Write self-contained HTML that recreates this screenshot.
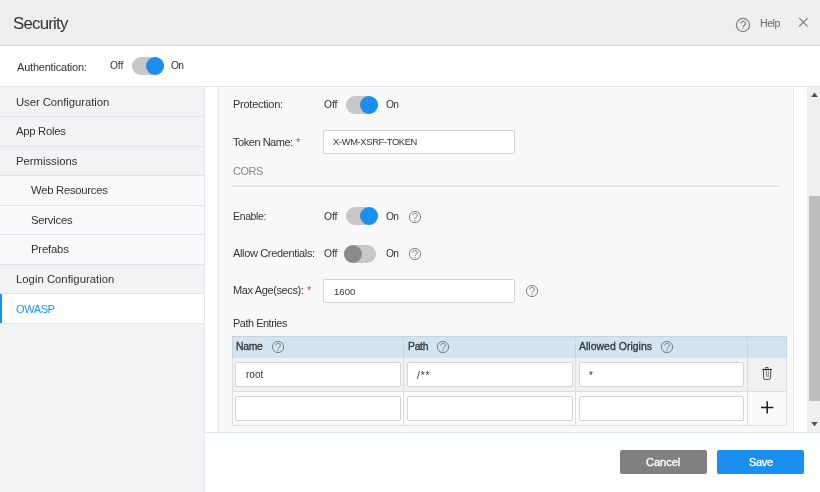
<!DOCTYPE html>
<html><head><meta charset="utf-8">
<style>
*{box-sizing:border-box;margin:0;padding:0}
html,body{width:820px;height:492px;overflow:hidden;background:#fff;font-family:"Liberation Sans",sans-serif;color:#333}
.t{position:absolute;white-space:nowrap;will-change:transform}
.b{position:absolute}
</style></head><body>
<div class="b" style="left:0px;top:0px;width:820px;height:45px;background:#eeeeee"></div>
<div class="b" style="left:0px;top:45px;width:820px;height:1px;background:#dcdcdc"></div>
<div class="t" style="left:12.60px;top:14.00px;font-size:16.8px;line-height:19px;color:#333;font-weight:normal;letter-spacing:-0.747px;">Security</div>
<svg class="b" style="left:735.2px;top:16.6px" width="16" height="16" viewBox="-8 -8 16 16"><circle cx="0" cy="0" r="6.6" fill="none" stroke="#808080" stroke-width="1.2"/><path d="M-2.18 -1.49 A2.30 2.18 0 1 1 1.03 0.46 C0.23 0.92 0 1.26 0 1.95" fill="none" stroke="#808080" stroke-width="1.2"/><circle cx="0" cy="3.56" r="0.69" fill="#808080"/></svg>
<div class="t" style="left:759.60px;top:17.00px;font-size:10.58px;line-height:12px;color:#666;font-weight:normal;letter-spacing:-0.491px;">Help</div>
<svg class="b" style="left:797px;top:16px" width="12" height="12" viewBox="0 0 12 12"><path d="M2.2 2.2L10.6 10.3M10.6 2.2L2.2 10.3" stroke="#747474" stroke-width="1.1"/></svg>
<div class="b" style="left:0px;top:86px;width:820px;height:1px;background:#e0e7ea"></div>
<div class="t" style="left:17.30px;top:61.00px;font-size:11px;line-height:12px;color:#333;font-weight:normal;letter-spacing:-0.208px;">Authentication:</div>
<div class="t" style="left:110.00px;top:60.00px;font-size:10.23px;line-height:11px;color:#333;font-weight:normal;letter-spacing:-0.101px;">Off</div>
<div class="b" style="left:132px;top:57px;width:32px;height:18px;border-radius:9px;background:#c9c7c7"></div>
<div class="b" style="left:146px;top:57px;width:18px;height:18px;border-radius:9px;background:#1a8fef"></div>
<div class="t" style="left:171.30px;top:60.00px;font-size:10.23px;line-height:11px;color:#333;font-weight:normal;letter-spacing:-0.600px;">On</div>
<div class="b" style="left:0px;top:87px;width:204px;height:405px;background:#f1f3f5"></div>
<div class="b" style="left:204px;top:87px;width:1px;height:405px;background:#e0e6ea"></div>
<div class="b" style="left:0px;top:87px;width:204px;height:29px;background:#f2f3f5"></div>
<div class="b" style="left:0px;top:116px;width:204px;height:1px;background:#dfe4e8"></div>
<div class="t" style="left:16.40px;top:96.00px;font-size:11.3px;line-height:12px;color:#333;font-weight:normal;letter-spacing:-0.059px;">User Configuration</div>
<div class="b" style="left:0px;top:117px;width:204px;height:29px;background:#f2f3f5"></div>
<div class="b" style="left:0px;top:146px;width:204px;height:1px;background:#dfe4e8"></div>
<div class="t" style="left:16.40px;top:125.00px;font-size:11.3px;line-height:12px;color:#333;font-weight:normal;letter-spacing:-0.284px;">App Roles</div>
<div class="b" style="left:0px;top:147px;width:204px;height:28px;background:#f2f3f5"></div>
<div class="b" style="left:0px;top:175px;width:204px;height:1px;background:#dfe4e8"></div>
<div class="t" style="left:16.40px;top:155.00px;font-size:11.3px;line-height:12px;color:#333;font-weight:normal;letter-spacing:-0.007px;">Permissions</div>
<div class="b" style="left:0px;top:176px;width:204px;height:29px;background:#f8f9fb"></div>
<div class="b" style="left:0px;top:205px;width:204px;height:1px;background:#dfe4e8"></div>
<div class="t" style="left:30.80px;top:184.00px;font-size:11.3px;line-height:12px;color:#333;font-weight:normal;letter-spacing:-0.276px;">Web Resources</div>
<div class="b" style="left:0px;top:206px;width:204px;height:28px;background:#f8f9fb"></div>
<div class="b" style="left:0px;top:234px;width:204px;height:1px;background:#dfe4e8"></div>
<div class="t" style="left:30.80px;top:214.00px;font-size:11.3px;line-height:12px;color:#333;font-weight:normal;letter-spacing:-0.238px;">Services</div>
<div class="b" style="left:0px;top:235px;width:204px;height:29px;background:#f8f9fb"></div>
<div class="b" style="left:0px;top:264px;width:204px;height:1px;background:#dfe4e8"></div>
<div class="t" style="left:30.80px;top:243.00px;font-size:11.3px;line-height:12px;color:#333;font-weight:normal;letter-spacing:-0.181px;">Prefabs</div>
<div class="b" style="left:0px;top:265px;width:204px;height:28px;background:#f2f3f5"></div>
<div class="b" style="left:0px;top:293px;width:204px;height:1px;background:#dfe4e8"></div>
<div class="t" style="left:16.40px;top:273.00px;font-size:11.3px;line-height:12px;color:#333;font-weight:normal;letter-spacing:0.017px;">Login Configuration</div>
<div class="b" style="left:0px;top:294px;width:204px;height:29px;background:#ffffff"></div>
<div class="b" style="left:0px;top:323px;width:204px;height:1px;background:#dfe4e8"></div>
<div class="t" style="left:16.40px;top:303.00px;font-size:11.11px;line-height:12px;color:#2196f3;font-weight:normal;letter-spacing:-0.484px;">OWASP</div>
<div class="b" style="left:0px;top:294px;width:2px;height:29px;background:#1a8fef"></div>
<div class="b" style="left:205px;top:87px;width:615px;height:345px;background:#fff"></div>
<div class="b" style="left:218px;top:87px;width:576px;height:345px;background:#f8f8f8"></div>
<div class="b" style="left:218px;top:87px;width:1px;height:345px;background:#e8e8e8"></div>
<div class="b" style="left:793px;top:87px;width:1px;height:345px;background:#e6e6e6"></div>
<div class="t" style="left:232.60px;top:98.00px;font-size:11px;line-height:12px;color:#333;font-weight:normal;letter-spacing:-0.253px;">Protection:</div>
<div class="t" style="left:323.50px;top:99.00px;font-size:10.28px;line-height:11px;color:#333;font-weight:normal;letter-spacing:-0.076px;">Off</div>
<div class="b" style="left:346px;top:96px;width:32px;height:18px;border-radius:9px;background:#c9c7c7"></div>
<div class="b" style="left:360px;top:96px;width:18px;height:18px;border-radius:9px;background:#1a8fef"></div>
<div class="t" style="left:385.70px;top:99.00px;font-size:10.23px;line-height:11px;color:#333;font-weight:normal;letter-spacing:-0.600px;">On</div>
<div class="t" style="left:232.90px;top:136.00px;font-size:10.97px;line-height:12px;color:#333;font-weight:normal;letter-spacing:-0.448px;">Token Name:</div>
<div class="t" style="left:295.50px;top:136.00px;font-size:11px;line-height:12px;color:#f03e3e;font-weight:normal;letter-spacing:0.000px;">*</div>
<div class="b" style="left:323px;top:130px;width:192px;height:24px;background:#fff;border:1px solid #d3d3d3;border-radius:2px"></div>
<div class="t" style="left:333.40px;top:136.00px;font-size:9.4px;line-height:11px;color:#333;font-weight:normal;letter-spacing:-0.360px;">X-WM-XSRF-TOKEN</div>
<div class="t" style="left:232.90px;top:165.00px;font-size:10.97px;line-height:12px;color:#888;font-weight:normal;letter-spacing:-0.425px;">CORS</div>
<div class="b" style="left:232px;top:185px;width:548px;height:2px;background:#e9e9e9"></div>
<div class="t" style="left:232.70px;top:211.00px;font-size:10.42px;line-height:11px;color:#333;font-weight:normal;letter-spacing:-0.300px;">Enable:</div>
<div class="t" style="left:323.80px;top:211.00px;font-size:10.35px;line-height:11px;color:#333;font-weight:normal;letter-spacing:-0.066px;">Off</div>
<div class="b" style="left:346px;top:207px;width:32px;height:18px;border-radius:9px;background:#c9c7c7"></div>
<div class="b" style="left:360px;top:207px;width:18px;height:18px;border-radius:9px;background:#1a8fef"></div>
<div class="t" style="left:385.50px;top:211.00px;font-size:10.23px;line-height:11px;color:#333;font-weight:normal;letter-spacing:-0.600px;">On</div>
<svg class="b" style="left:407.0px;top:208.5px" width="16" height="16" viewBox="-8 -8 16 16"><circle cx="0" cy="0" r="5.6" fill="none" stroke="#808080" stroke-width="1.0"/><path d="M-2.13 -1.46 A2.24 2.13 0 1 1 1.01 0.45 C0.22 0.90 0 1.23 0 1.90" fill="none" stroke="#808080" stroke-width="1.0"/><circle cx="0" cy="3.47" r="0.67" fill="#808080"/></svg>
<div class="t" style="left:232.70px;top:247.00px;font-size:11px;line-height:12px;color:#333;font-weight:normal;letter-spacing:-0.346px;">Allow Credentials:</div>
<div class="t" style="left:323.80px;top:248.00px;font-size:10.35px;line-height:11px;color:#333;font-weight:normal;letter-spacing:-0.066px;">Off</div>
<div class="b" style="left:344px;top:245px;width:32px;height:18px;border-radius:9px;background:#c9c7c7"></div>
<div class="b" style="left:344px;top:245px;width:18px;height:18px;border-radius:9px;background:#8a8a8a"></div>
<div class="t" style="left:385.50px;top:248.00px;font-size:10.23px;line-height:11px;color:#333;font-weight:normal;letter-spacing:-0.600px;">On</div>
<svg class="b" style="left:407.0px;top:246.3px" width="16" height="16" viewBox="-8 -8 16 16"><circle cx="0" cy="0" r="5.6" fill="none" stroke="#808080" stroke-width="1.0"/><path d="M-2.13 -1.46 A2.24 2.13 0 1 1 1.01 0.45 C0.22 0.90 0 1.23 0 1.90" fill="none" stroke="#808080" stroke-width="1.0"/><circle cx="0" cy="3.47" r="0.67" fill="#808080"/></svg>
<div class="t" style="left:232.90px;top:284.00px;font-size:11px;line-height:12px;color:#333;font-weight:normal;letter-spacing:-0.381px;">Max Age(secs):</div>
<div class="t" style="left:307.00px;top:284.00px;font-size:11px;line-height:12px;color:#f03e3e;font-weight:normal;letter-spacing:0.000px;">*</div>
<div class="b" style="left:323px;top:279px;width:192px;height:24px;background:#fff;border:1px solid #d3d3d3;border-radius:2px"></div>
<div class="t" style="left:333.50px;top:286.00px;font-size:9.6px;line-height:11px;color:#333;font-weight:normal;letter-spacing:-0.002px;">1600</div>
<svg class="b" style="left:523.9px;top:283.1px" width="16" height="16" viewBox="-8 -8 16 16"><circle cx="0" cy="0" r="5.6" fill="none" stroke="#808080" stroke-width="1.0"/><path d="M-2.13 -1.46 A2.24 2.13 0 1 1 1.01 0.45 C0.22 0.90 0 1.23 0 1.90" fill="none" stroke="#808080" stroke-width="1.0"/><circle cx="0" cy="3.47" r="0.67" fill="#808080"/></svg>
<div class="t" style="left:232.90px;top:317.00px;font-size:10.9px;line-height:12px;color:#333;font-weight:normal;letter-spacing:-0.453px;">Path Entries</div>
<div class="b" style="left:232px;top:336px;width:555px;height:90px;background:#fafafa;border:1px solid #dedede"></div>
<div class="b" style="left:232px;top:336px;width:555px;height:22px;background:#d3e4f1;border:1px solid #c8d4dc"></div>
<div class="b" style="left:232px;top:357px;width:555px;height:35px;background:#f1f1f1;border:1px solid #dedede"></div>
<div class="b" style="left:403px;top:357px;width:1px;height:69px;background:#dcdcdc"></div>
<div class="b" style="left:403px;top:337px;width:1px;height:20px;background:#c4d6e4"></div>
<div class="b" style="left:575px;top:357px;width:1px;height:69px;background:#dcdcdc"></div>
<div class="b" style="left:575px;top:337px;width:1px;height:20px;background:#c4d6e4"></div>
<div class="b" style="left:747px;top:357px;width:1px;height:69px;background:#dcdcdc"></div>
<div class="b" style="left:747px;top:337px;width:1px;height:20px;background:#c4d6e4"></div>
<div class="t" style="left:235.90px;top:341.00px;font-size:10.4px;line-height:11px;color:#3a3a3a;font-weight:normal;letter-spacing:-0.313px;-webkit-text-stroke:0.35px #3a3a3a">Name</div>
<div class="t" style="left:407.60px;top:341.00px;font-size:10.4px;line-height:11px;color:#3a3a3a;font-weight:normal;letter-spacing:-0.299px;-webkit-text-stroke:0.35px #3a3a3a">Path</div>
<div class="t" style="left:579.40px;top:341.00px;font-size:10.4px;line-height:11px;color:#3a3a3a;font-weight:normal;letter-spacing:0.058px;-webkit-text-stroke:0.35px #3a3a3a">Allowed Origins</div>
<svg class="b" style="left:270.0px;top:339.2px" width="16" height="16" viewBox="-8 -8 16 16"><circle cx="0" cy="0" r="5.6" fill="none" stroke="#808080" stroke-width="1.0"/><path d="M-2.13 -1.46 A2.24 2.13 0 1 1 1.01 0.45 C0.22 0.90 0 1.23 0 1.90" fill="none" stroke="#808080" stroke-width="1.0"/><circle cx="0" cy="3.47" r="0.67" fill="#808080"/></svg>
<svg class="b" style="left:435.0px;top:339.1px" width="16" height="16" viewBox="-8 -8 16 16"><circle cx="0" cy="0" r="5.6" fill="none" stroke="#808080" stroke-width="1.0"/><path d="M-2.13 -1.46 A2.24 2.13 0 1 1 1.01 0.45 C0.22 0.90 0 1.23 0 1.90" fill="none" stroke="#808080" stroke-width="1.0"/><circle cx="0" cy="3.47" r="0.67" fill="#808080"/></svg>
<svg class="b" style="left:658.7px;top:339.1px" width="16" height="16" viewBox="-8 -8 16 16"><circle cx="0" cy="0" r="5.6" fill="none" stroke="#808080" stroke-width="1.0"/><path d="M-2.13 -1.46 A2.24 2.13 0 1 1 1.01 0.45 C0.22 0.90 0 1.23 0 1.90" fill="none" stroke="#808080" stroke-width="1.0"/><circle cx="0" cy="3.47" r="0.67" fill="#808080"/></svg>
<div class="b" style="left:235px;top:362px;width:166px;height:25px;background:#fff;border:1px solid #d5d5d5;border-radius:2px"></div>
<div class="b" style="left:235px;top:396px;width:166px;height:25px;background:#fff;border:1px solid #d5d5d5;border-radius:2px"></div>
<div class="b" style="left:407px;top:362px;width:166px;height:25px;background:#fff;border:1px solid #d5d5d5;border-radius:2px"></div>
<div class="b" style="left:407px;top:396px;width:166px;height:25px;background:#fff;border:1px solid #d5d5d5;border-radius:2px"></div>
<div class="b" style="left:579px;top:362px;width:165px;height:25px;background:#fff;border:1px solid #d5d5d5;border-radius:2px"></div>
<div class="b" style="left:579px;top:396px;width:165px;height:25px;background:#fff;border:1px solid #d5d5d5;border-radius:2px"></div>
<div class="t" style="left:245.60px;top:369.00px;font-size:10px;line-height:11px;color:#333;font-weight:normal;letter-spacing:0.000px;">root</div>
<div class="t" style="left:416.80px;top:370.00px;font-size:10px;line-height:11px;color:#333;font-weight:normal;letter-spacing:0.915px;">/**</div>
<div class="t" style="left:588.80px;top:370.00px;font-size:10px;line-height:11px;color:#333;font-weight:normal;letter-spacing:0.000px;">*</div>
<svg class="b" style="left:760px;top:365px" width="14" height="16" viewBox="0 0 14 16"><path d="M5.5 3.6V2.6h2.7v1" fill="none" stroke="#444" stroke-width="1"/><path d="M2.2 4.5H11.9" stroke="#222" stroke-width="1.1"/><path d="M3.4 4.8L3.6 13.3Q3.7 14.4 4.8 14.4H9.3Q10.4 14.4 10.5 13.3L10.8 4.8" fill="none" stroke="#444" stroke-width="0.95"/><path d="M6.4 5.6V12.2M8.3 5.6V12.2" stroke="#666" stroke-width="0.75"/></svg>
<svg class="b" style="left:760px;top:400px" width="15" height="15" viewBox="0 0 15 15"><path d="M7.2 1.3V13.5M1 7.4H13.3" stroke="#1e1e1e" stroke-width="1.5"/></svg>
<div class="b" style="left:807px;top:87px;width:13px;height:345px;background:#efefef"></div>
<div class="b" style="left:809px;top:196px;width:11px;height:205px;background:#bdbdbd"></div>
<svg class="b" style="left:807px;top:87px" width="13" height="345" viewBox="0 0 13 345"><path d="M7.5 5.6L4.2 9.9H10.8Z" fill="#505050"/><path d="M4.2 335H10.8L7.5 339.3Z" fill="#505050"/></svg>
<div class="b" style="left:205px;top:432px;width:615px;height:1px;background:#e0e7ea"></div>
<div class="b" style="left:620px;top:450px;width:87px;height:24px;background:#808080;border-radius:2px"></div>
<div class="b" style="left:717px;top:450px;width:87px;height:24px;background:#1a8fef;border-radius:2px"></div>
<div class="t" style="left:645.90px;top:456.00px;font-size:11px;line-height:12px;color:#fff;font-weight:normal;letter-spacing:0.001px;-webkit-text-stroke:0.35px #fff">Cancel</div>
<div class="t" style="left:749.00px;top:456.00px;font-size:11px;line-height:12px;color:#fff;font-weight:normal;letter-spacing:-0.318px;-webkit-text-stroke:0.35px #fff">Save</div>
</body></html>
